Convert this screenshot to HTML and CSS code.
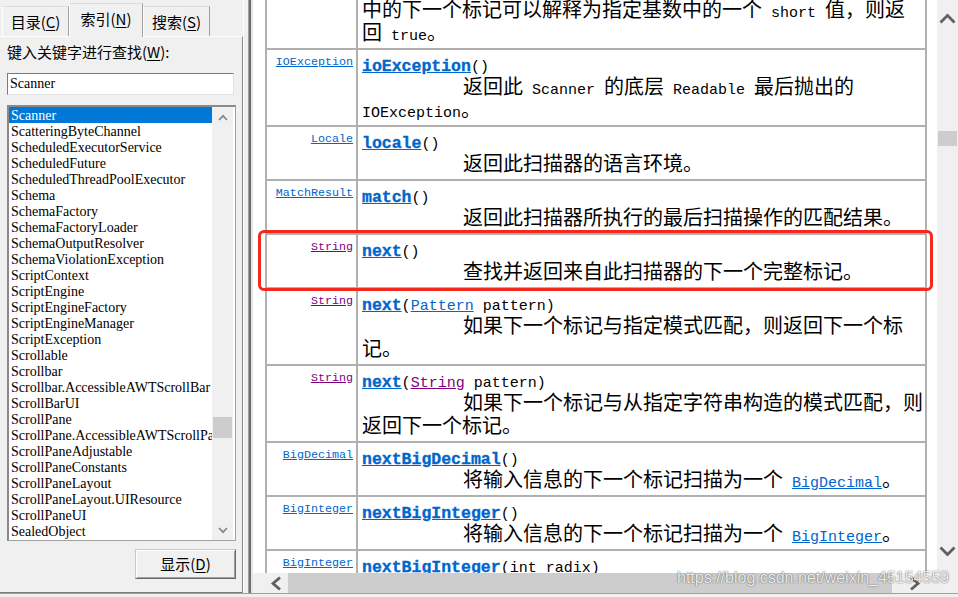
FILE: index.html
```html
<!DOCTYPE html>
<html lang="zh-CN">
<head>
<meta charset="utf-8">
<title>Scanner - 索引</title>
<link rel="stylesheet" href="styles.css">
</head>
<body>
<div class="window">
  <aside class="nav">
    <div class="tabs">
      <div class="tab">目录(<u>C</u>)</div>
      <div class="tab active">索引(<u>N</u>)</div>
      <div class="tab">搜索(<u>S</u>)</div>
    </div>
    <div class="tabpanel">
      <label class="kw-label">键入关键字进行查找(<u>W</u>):</label>
      <div class="kw-input">Scanner</div>
      <div class="listbox">
        <ul class="items">
          <li class="sel">Scanner</li>
          <li>ScatteringByteChannel</li>
          <li>ScheduledExecutorService</li>
          <li>ScheduledFuture</li>
          <li>ScheduledThreadPoolExecutor</li>
          <li>Schema</li>
          <li>SchemaFactory</li>
          <li>SchemaFactoryLoader</li>
          <li>SchemaOutputResolver</li>
          <li>SchemaViolationException</li>
          <li>ScriptContext</li>
          <li>ScriptEngine</li>
          <li>ScriptEngineFactory</li>
          <li>ScriptEngineManager</li>
          <li>ScriptException</li>
          <li>Scrollable</li>
          <li>Scrollbar</li>
          <li>Scrollbar.AccessibleAWTScrollBar</li>
          <li>ScrollBarUI</li>
          <li>ScrollPane</li>
          <li>ScrollPane.AccessibleAWTScrollPane</li>
          <li>ScrollPaneAdjustable</li>
          <li>ScrollPaneConstants</li>
          <li>ScrollPaneLayout</li>
          <li>ScrollPaneLayout.UIResource</li>
          <li>ScrollPaneUI</li>
          <li>SealedObject</li>
        </ul>
        <div class="lb-scroll">
          <div class="lb-btn"><svg width="10" height="7" viewBox="0 0 10 7"><polyline points="1,6 5,1.8 9,6" fill="none" stroke="#858585" stroke-width="1.7"/></svg></div>
          <div class="lb-track"><div class="lb-thumb"></div></div>
          <div class="lb-btn"><svg width="10" height="7" viewBox="0 0 10 7"><polyline points="1,1 5,5.2 9,1" fill="none" stroke="#858585" stroke-width="1.7"/></svg></div>
        </div>
      </div>
      <div class="btn-row"><button class="btn">显示(<u>D</u>)</button></div>
    </div>
  </aside>
  <div class="splitter"></div>
  <section class="doc">
    <div class="doc-main">
      <div class="doc-content">
        <table class="summary">
          <colgroup><col class="c-type"><col></colgroup>
          <tr>
            <td class="type"></td>
            <td class="member"><div class="desc cont">中的下一个标记可以解释为指定基数中的一个<code> short </code>值，则返<br>回<code> true</code>。</div></td>
          </tr>
          <tr>
            <td class="type"><a href="#">IOException</a></td>
            <td class="member"><div class="sig"><a class="m" href="#">ioException</a>()</div><div class="desc">返回此<code> Scanner </code>的底层<code> Readable </code>最后抛出的<br><code>IOException</code>。</div></td>
          </tr>
          <tr>
            <td class="type"><a href="#">Locale</a></td>
            <td class="member"><div class="sig"><a class="m" href="#">locale</a>()</div><div class="desc">返回此扫描器的语言环境。</div></td>
          </tr>
          <tr>
            <td class="type"><a href="#">MatchResult</a></td>
            <td class="member"><div class="sig"><a class="m" href="#">match</a>()</div><div class="desc">返回此扫描器所执行的最后扫描操作的匹配结果。</div></td>
          </tr>
          <tr>
            <td class="type"><a class="visited" href="#">String</a></td>
            <td class="member"><div class="sig"><a class="m" href="#">next</a>()</div><div class="desc">查找并返回来自此扫描器的下一个完整标记。</div></td>
          </tr>
          <tr>
            <td class="type"><a class="visited" href="#">String</a></td>
            <td class="member"><div class="sig"><a class="m" href="#">next</a>(<a href="#">Pattern</a> pattern)</div><div class="desc">如果下一个标记与指定模式匹配，则返回下一个标<br>记。</div></td>
          </tr>
          <tr>
            <td class="type"><a class="visited" href="#">String</a></td>
            <td class="member"><div class="sig"><a class="m" href="#">next</a>(<a class="visited" href="#">String</a> pattern)</div><div class="desc">如果下一个标记与从指定字符串构造的模式匹配，则<br>返回下一个标记。</div></td>
          </tr>
          <tr>
            <td class="type"><a href="#">BigDecimal</a></td>
            <td class="member"><div class="sig"><a class="m" href="#">nextBigDecimal</a>()</div><div class="desc">将输入信息的下一个标记扫描为一个<code> <a href="#">BigDecimal</a></code>。</div></td>
          </tr>
          <tr>
            <td class="type"><a href="#">BigInteger</a></td>
            <td class="member"><div class="sig"><a class="m" href="#">nextBigInteger</a>()</div><div class="desc">将输入信息的下一个标记扫描为一个<code> <a href="#">BigInteger</a></code>。</div></td>
          </tr>
          <tr>
            <td class="type"><a href="#">BigInteger</a></td>
            <td class="member"><div class="sig"><a class="m" href="#">nextBigInteger</a>(int radix)</div><div class="desc">将输入信息的下一个标记扫描为一个<code> <a href="#">BigInteger</a></code>。</div></td>
          </tr>
        </table>
      </div>
      <div class="vscroll">
        <div class="vs-up"><svg width="17" height="11" viewBox="0 0 17 11"><polyline points="1.5,9.5 8.5,2.5 15.5,9.5" fill="none" stroke="#606060" stroke-width="2.8"/></svg></div>
        <div class="vs-track"><div class="vs-thumb"></div></div>
        <div class="vs-down"><svg width="17" height="11" viewBox="0 0 17 11"><polyline points="1.5,1.5 8.5,8.5 15.5,1.5" fill="none" stroke="#606060" stroke-width="2.8"/></svg></div>
      </div>
    </div>
    <div class="hscroll">
      <div class="hs-left"><svg width="12" height="15" viewBox="0 0 12 15"><polyline points="10,1.5 3,7.5 10,13.5" fill="none" stroke="#606060" stroke-width="2.8"/></svg></div>
      <div class="hs-track"><div class="hs-thumb"></div></div>
      <div class="hs-right"><svg width="12" height="15" viewBox="0 0 12 15"><polyline points="2,1.5 9,7.5 2,13.5" fill="none" stroke="#606060" stroke-width="2.8"/></svg></div>
      <div class="hs-corner"></div>
    </div>
  </section>
</div>
<div class="highlight"></div>
<div class="watermark">https://blog.csdn.net/weixin_45154559</div>
</body>
</html>
```

FILE: styles.css
```css
* { box-sizing: border-box; }
html, body { margin: 0; padding: 0; }
body {
  width: 958px;
  height: 597px;
  overflow: hidden;
  position: relative;
  background: #f0f0f0;
  font-family: "Noto Sans CJK SC", "Noto Sans", sans-serif;
  color: #000;
}
u { text-decoration: underline; text-underline-offset: 2px; }

.window {
  display: flex;
  height: 594px;
  border-bottom: 1px solid #a0a0a0;
}

/* ---------- left navigation ---------- */
.nav {
  width: 243px;
  display: flex;
  flex-direction: column;
}
.tabs {
  height: 36px;
  display: flex;
  align-items: flex-end;
  padding-left: 2px;
}
.tab {
  width: 67px;
  height: 30px;
  display: flex;
  align-items: center;
  justify-content: center;
  font-size: 15px;
  line-height: 18px;
  color: #000;
  background: #f0f0f0;
  border: 1px solid;
  border-color: #dcdcdc #a0a0a0 transparent #fdfdfd;
  border-bottom: none;
}
.tab.active {
  width: 74px;
  height: 34px;
  margin-bottom: -1px;
  padding-bottom: 3px;
  position: relative;
  z-index: 1;
}
.tabpanel {
  flex: 1;
  display: flex;
  flex-direction: column;
  padding: 6px 6px 0 7px;
  border-top: 1px solid #fdfdfd;
  border-right: 1px solid #8a8a8a;
  border-bottom: 1px solid #7a7a7a;
}
.kw-label {
  display: block;
  font-size: 15px;
  line-height: 18px;
}
.kw-input {
  margin-top: 12px;
  width: 227px;
  height: 22px;
  background: #fff;
  border: 1px solid;
  border-color: #7a7a7a #e3e3e3 #e3e3e3 #7a7a7a;
  padding-left: 2px;
  font-family: "Liberation Serif", serif;
  font-size: 14px;
  line-height: 20px;
}
.listbox {
  margin-top: 10px;
  width: 229px;
  height: 436px;
  display: flex;
  background: #fff;
  border-style: solid;
  border-width: 2px 1px 1px 2px;
  border-color: #8a8a8a #a0a0a0 #a0a0a0 #8a8a8a;
  padding-right: 2px;
}
.items {
  flex: 1;
  min-width: 0;
  list-style: none;
  margin: 0;
  padding: 0;
  overflow: hidden;
}
.items li {
  height: 16px;
  line-height: 17px;
  padding-left: 2px;
  white-space: nowrap;
  overflow: hidden;
  font-family: "Liberation Serif", serif;
  font-size: 14px;
}
.items li.sel {
  background: #0078d7;
  color: #fff;
}
.lb-scroll {
  width: 21px;
  display: flex;
  flex-direction: column;
  background: #f0f0f0;
}
.lb-btn {
  height: 20px;
  display: flex;
  align-items: center;
  justify-content: center;
}
.lb-track { flex: 1; padding: 0 1px; }
.lb-thumb {
  margin-top: 290px;
  height: 21px;
  background: #cdcdcd;
}
.btn-row {
  margin-top: 8px;
  display: flex;
  justify-content: flex-end;
}
.btn {
  width: 101px;
  height: 30px;
  margin: 0;
  padding: 0;
  background: #f0f0f0;
  border: 1px solid;
  border-color: #c8c8c8 #696969 #696969 #c8c8c8;
  box-shadow: inset 1px 1px 0 #fff, inset -1px -1px 0 #a0a0a0;
  font-family: "Noto Sans CJK SC", sans-serif;
  font-size: 15px;
  line-height: 18px;
  color: #000;
}

/* ---------- splitter & doc frame ---------- */
.splitter {
  width: 6px;
  border-left: 1px solid #fdfdfd;
  border-right: 1px solid #a0a0a0;
}
.doc {
  flex: 1;
  display: flex;
  flex-direction: column;
  border-left: 2px solid #6e6e6e;
  padding-left: 2px;
  background: #e6e6e6;
}
.doc-main {
  height: 573px;
  display: flex;
}
.doc-content {
  flex: 1;
  background: #fff;
  overflow: hidden;
}
.vscroll {
  width: 21px;
  display: flex;
  flex-direction: column;
  background: #f0f0f0;
}
.vs-up, .vs-down {
  display: flex;
  align-items: center;
  justify-content: center;
}
.vs-up { height: 36px; }
.vs-down { height: 44px; }
.vs-track { flex: 1; padding: 0 1px; }
.vs-thumb {
  margin-top: 95px;
  height: 15px;
  background: #cdcdcd;
}
.hscroll {
  height: 20px;
  display: flex;
  background: #f0f0f0;
}
.hs-left {
  width: 35px;
  display: flex;
  align-items: center;
  padding-left: 17px;
}
.hs-track { flex: 1; }
.hs-thumb {
  width: 604px;
  height: 20px;
  background: #cdcdcd;
}
.hs-right {
  width: 23px;
  display: flex;
  align-items: center;
  justify-content: center;
}
.hs-corner { width: 32px; }

/* ---------- method summary table ---------- */
.summary {
  border-collapse: collapse;
  table-layout: fixed;
  width: 662px;
  margin: -9px 0 0 12px;
}
.c-type { width: 91px; }
.summary td {
  border: 2px solid #b0b0b0;
  vertical-align: top;
  padding: 4px 4px 5px 4px;
}
.summary td.type {
  padding: 5px 3px 5px 2px;
  text-align: right;
  font-family: "Liberation Mono", monospace;
  font-size: 11.7px;
  line-height: 15px;
  white-space: nowrap;
}
.summary a {
  color: #0066cc;
  text-decoration: underline;
}
.summary a.visited { color: #800080; }
.sig {
  font-family: "Liberation Mono", monospace;
  font-size: 15px;
  line-height: 23px;
  height: 20px;
  padding-top: 2px;
  white-space: nowrap;
}
.sig a.m {
  font-size: 16.5px;
  font-weight: bold;
  line-height: 0;
  -webkit-text-stroke: 0.35px currentColor;
}
.desc {
  font-size: 20px;
  line-height: 23px;
  text-indent: 101px;
  white-space: nowrap;
}
.desc.cont { text-indent: 0; }
.desc code {
  font-family: "Liberation Mono", monospace;
  font-size: 15px;
  line-height: 0;
}

/* ---------- overlays ---------- */
.highlight {
  position: absolute;
  left: 258px;
  top: 230px;
  width: 675px;
  height: 61px;
  border: 3.5px solid #f2291c;
  border-radius: 6px;
}
.watermark {
  position: absolute;
  left: 677px;
  top: 569px;
  font-family: "Liberation Sans", Arial, sans-serif;
  font-size: 16px;
  line-height: 18px;
  color: rgba(255, 255, 255, 0.9);
  text-shadow: 0 0 1px rgba(0, 0, 0, 0.55), 0 0 2px rgba(0, 0, 0, 0.3);
  white-space: nowrap;
}
```
